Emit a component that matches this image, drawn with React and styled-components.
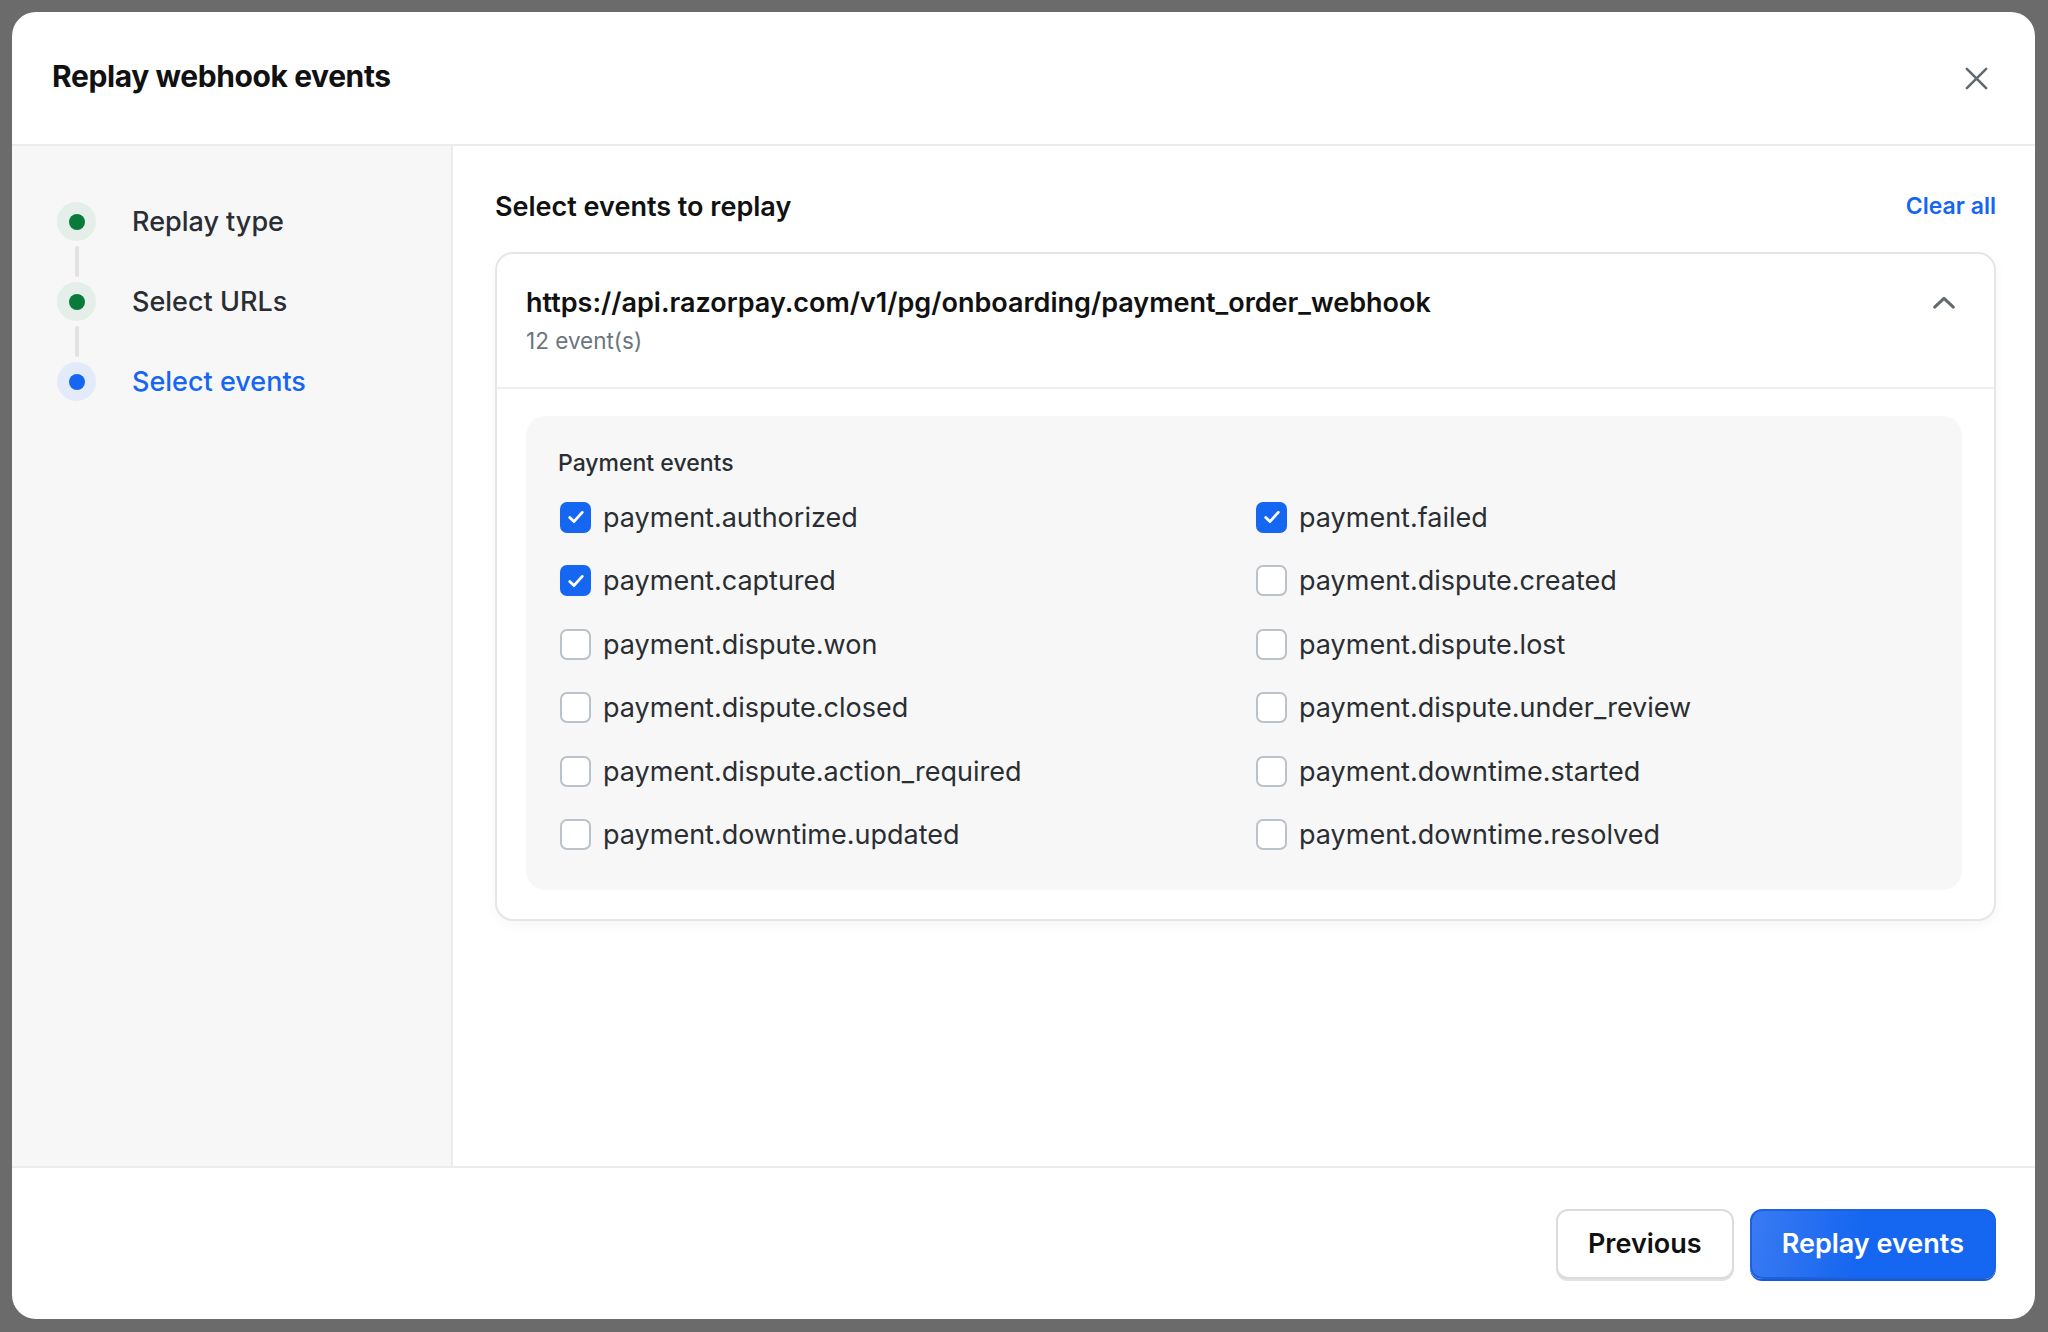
import React from "react";
import { styled, createGlobalStyle } from "styled-components";

const GlobalStyle = createGlobalStyle`
  html, body {
    margin: 0;
    padding: 0;
    background: #6b6b6b;
  }
  body {
    font-family: Inter, "Noto Sans", "Liberation Sans", sans-serif;
    color: #1f2328;
  }
  * {
    box-sizing: border-box;
  }
`;

const Backdrop = styled.div`
  width: 2048px;
  height: 1332px;
  padding: 12px 13px 13px 12px;
`;

const Modal = styled.div`
  height: 100%;
  background: #fff;
  border-radius: 24px;
  display: flex;
  flex-direction: column;
  overflow: hidden;
`;

const Header = styled.header`
  height: 134px;
  flex-shrink: 0;
  display: flex;
  align-items: center;
  justify-content: space-between;
  padding: 0 44px 0 40px;
  border-bottom: 2px solid #ececec;
`;

const Title = styled.h1`
  margin: 0 0 4px;
  font-size: 30px;
  font-weight: 700;
  letter-spacing: -0.4px;
  color: #111;
`;

const IconButton = styled.button`
  border: none;
  background: none;
  padding: 0;
  display: flex;
  color: #5f6a72;
  cursor: pointer;
`;

const Body = styled.div`
  flex: 1;
  display: flex;
  min-height: 0;
`;

const Sidebar = styled.aside`
  width: 441px;
  flex-shrink: 0;
  background: #f7f7f7;
  border-right: 2px solid #ececec;
  padding: 56px 0 0 45px;
`;

const StepList = styled.ol`
  list-style: none;
  margin: 0;
  padding: 0;
`;

const Step = styled.li`
  display: flex;
  flex-direction: column;
`;

const StepRow = styled.div`
  display: flex;
  align-items: center;
  gap: 36px;
`;

const Dot = styled.span`
  width: 39px;
  height: 39px;
  border-radius: 50%;
  background: ${(p) => (p.$active ? "#e3ebfb" : "#e5eee8")};
  display: flex;
  align-items: center;
  justify-content: center;
  &::after {
    content: "";
    width: 16px;
    height: 16px;
    border-radius: 50%;
    background: ${(p) => (p.$active ? "#1566f0" : "#0a7a3c")};
  }
`;

const StepLabel = styled.span`
  font-size: 27px;
  font-weight: 500;
  color: ${(p) => (p.$active ? "#1566f0" : "#2a2e33")};
`;

const Connector = styled.span`
  width: 4px;
  height: 31px;
  margin: 5px 0 5px 17.5px;
  background: #e2e2e2;
  border-radius: 2px;
`;

const Content = styled.main`
  flex: 1;
  padding: 40px 39px 0 42px;
`;

const SectionHead = styled.div`
  display: flex;
  align-items: center;
  justify-content: space-between;
  height: 40px;
  margin-bottom: 26px;
`;

const SectionTitle = styled.h2`
  margin: 0;
  font-size: 27px;
  font-weight: 600;
  color: #111;
`;

const LinkButton = styled.button`
  border: none;
  background: none;
  padding: 0;
  font-family: inherit;
  font-size: 23px;
  font-weight: 600;
  color: #1566f0;
  cursor: pointer;
`;

const Card = styled.section`
  border: 2px solid #e6e6e6;
  border-radius: 18px;
  box-shadow: 0 4px 12px rgba(0, 0, 0, 0.04);
  background: #fff;
`;

const CardHeader = styled.div`
  height: 135px;
  display: flex;
  justify-content: space-between;
  align-items: flex-start;
  padding: 32px 36px 0 29px;
  border-bottom: 2px solid #f0f0f0;
`;

const UrlBlock = styled.div`
  display: flex;
  flex-direction: column;
  gap: 8px;
`;

const Url = styled.div`
  font-size: 27px;
  font-weight: 600;
  color: #111;
`;

const Count = styled.div`
  font-size: 22.5px;
  color: #6b7480;
`;

const Chevron = styled.span`
  display: flex;
  color: #5f6a72;
  margin-top: 3px;
`;

const Panel = styled.div`
  margin: 27px 32px 29px 29px;
  background: #f7f7f7;
  border-radius: 20px;
  padding: 33px 32px 39px;
`;

const GroupTitle = styled.div`
  font-size: 23px;
  font-weight: 500;
  color: #2a2e33;
  margin-bottom: 24px;
`;

const Grid = styled.div`
  display: grid;
  grid-template-columns: 696px 1fr;
  row-gap: 31.5px;
`;

const Option = styled.label`
  display: flex;
  align-items: center;
  gap: 12px;
  height: 32px;
  margin-left: 2px;
  font-size: 27px;
  color: #2a2e33;
  cursor: pointer;
`;

const Box = styled.span`
  width: 31px;
  height: 31px;
  flex-shrink: 0;
  border-radius: 7px;
  display: flex;
  align-items: center;
  justify-content: center;
  background: ${(p) => (p.$checked ? "#1566f0" : "#fff")};
  border: ${(p) => (p.$checked ? "none" : "2.5px solid #bcc2c9")};
`;

const Footer = styled.footer`
  height: 153px;
  flex-shrink: 0;
  border-top: 2px solid #ececec;
  display: flex;
  align-items: center;
  justify-content: flex-end;
  gap: 16px;
  padding: 0 39px 0 0;
`;

const Button = styled.button`
  height: 70px;
  padding: 0 30px;
  border-radius: 12px;
  font-family: inherit;
  font-size: 27px;
  font-weight: 600;
  cursor: pointer;
  color: ${(p) => (p.$primary ? "#fff" : "#111")};
  background: ${(p) =>
    p.$primary ? "linear-gradient(100deg, #3a7af2 0%, #1566f0 45%)" : "#fff"};
  border: 2px solid ${(p) => (p.$primary ? "#1a62e0" : "#dcdcdc")};
  box-shadow: ${(p) =>
    p.$primary ? "0 2px 0 #1a5ad0" : "0 2px 0 #e2e2e2"};
`;

const steps = [
  { label: "Replay type" },
  { label: "Select URLs" },
  { label: "Select events", active: true },
];

const events = [
  ["payment.authorized", true],
  ["payment.failed", true],
  ["payment.captured", true],
  ["payment.dispute.created", false],
  ["payment.dispute.won", false],
  ["payment.dispute.lost", false],
  ["payment.dispute.closed", false],
  ["payment.dispute.under_review", false],
  ["payment.dispute.action_required", false],
  ["payment.downtime.started", false],
  ["payment.downtime.updated", false],
  ["payment.downtime.resolved", false],
];

const CloseIcon = () => (
  <svg width="29" height="29" viewBox="0 0 24 24" fill="none" stroke="currentColor" strokeWidth="2.1" strokeLinecap="round">
    <path d="M4 4l16 16M20 4L4 20" />
  </svg>
);

const ChevronUp = () => (
  <svg width="28" height="28" viewBox="0 0 24 24" fill="none" stroke="currentColor" strokeWidth="2.6" strokeLinecap="round" strokeLinejoin="round">
    <path d="M4 15.5l8-7.5 8 7.5" />
  </svg>
);

const Check = () => (
  <svg width="20" height="20" viewBox="0 0 24 24" fill="none" stroke="#fff" strokeWidth="3.4" strokeLinecap="round" strokeLinejoin="round">
    <path d="M4.5 12.5l5 5 10-11" />
  </svg>
);

const App = () => {
  return (
    <Backdrop>
      <GlobalStyle />
      <Modal>
        <Header>
          <Title>Replay webhook events</Title>
          <IconButton aria-label="Close">
            <CloseIcon />
          </IconButton>
        </Header>

        <Body>
          <Sidebar>
            <StepList>
              {steps.map((s, i) => (
                <Step key={s.label}>
                  <StepRow>
                    <Dot $active={s.active} />
                    <StepLabel $active={s.active}>{s.label}</StepLabel>
                  </StepRow>
                  {i < steps.length - 1 && <Connector />}
                </Step>
              ))}
            </StepList>
          </Sidebar>

          <Content>
            <SectionHead>
              <SectionTitle>Select events to replay</SectionTitle>
              <LinkButton>Clear all</LinkButton>
            </SectionHead>

            <Card>
              <CardHeader>
                <UrlBlock>
                  <Url>https://api.razorpay.com/v1/pg/onboarding/payment_order_webhook</Url>
                  <Count>12 event(s)</Count>
                </UrlBlock>
                <Chevron>
                  <ChevronUp />
                </Chevron>
              </CardHeader>

              <Panel>
                <GroupTitle>Payment events</GroupTitle>
                <Grid>
                  {events.map(([name, checked]) => (
                    <Option key={name}>
                      <Box $checked={checked}>{checked && <Check />}</Box>
                      {name}
                    </Option>
                  ))}
                </Grid>
              </Panel>
            </Card>
          </Content>
        </Body>

        <Footer>
          <Button>Previous</Button>
          <Button $primary>Replay events</Button>
        </Footer>
      </Modal>
    </Backdrop>
  );
};

export default App;
